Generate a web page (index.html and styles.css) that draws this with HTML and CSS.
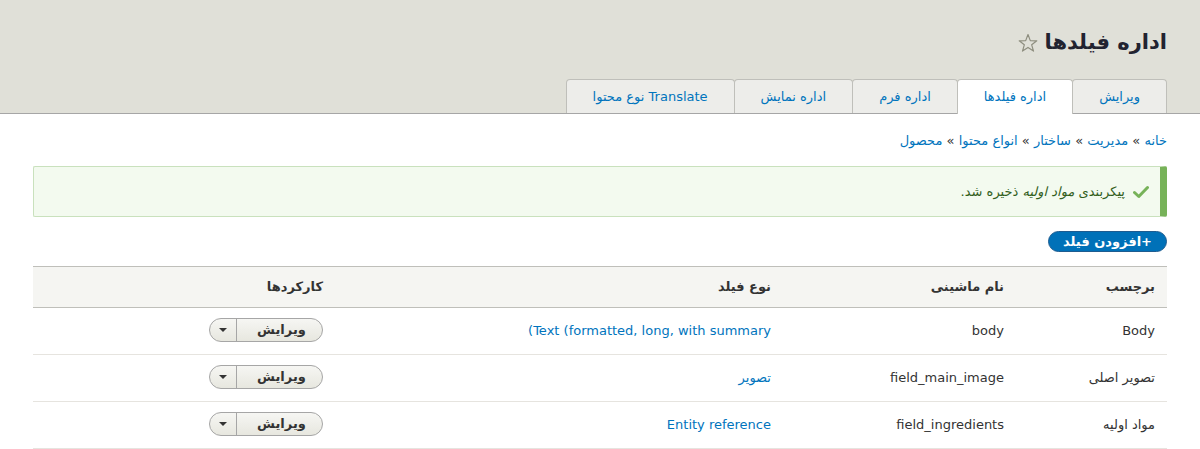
FILE: index.html
```html
<!DOCTYPE html>
<html lang="fa" dir="rtl">
<head>
<meta charset="utf-8">
<title>اداره فیلدها</title>
<link rel="stylesheet" href="styles.css">
</head>
<body>
<header class="page-header">
  <h1 class="page-title">اداره فیلدها <svg class="star" width="20" height="20" viewBox="0 0 20 20"><path d="M10 1.5 L12.3 7.6 L18.8 7.8 L13.7 11.8 L15.5 18.1 L10 14.4 L4.5 18.1 L6.3 11.8 L1.2 7.8 L7.7 7.6 Z" fill="none" stroke="#8e8e7f" stroke-width="1.2" stroke-linejoin="round"/></svg></h1>
  <ul class="tabs">
    <li class="tab"><a href="#">ویرایش</a></li>
    <li class="tab active"><a href="#">اداره فیلدها</a></li>
    <li class="tab"><a href="#">اداره فرم</a></li>
    <li class="tab"><a href="#">اداره نمایش</a></li>
    <li class="tab"><a href="#">Translate نوع محتوا</a></li>
  </ul>
</header>
<main class="content">
  <nav class="breadcrumb"><a href="#">خانه</a> » <a href="#">مدیریت</a> » <a href="#">ساختار</a> » <a href="#">انواع محتوا</a> » <a href="#">محصول</a></nav>
  <div class="message">
    <svg class="check" width="16" height="14" viewBox="0 0 16 14"><path d="M1.5 7.5 L5.8 11.5 L14.5 2.5" fill="none" stroke="#77b259" stroke-width="3" stroke-linecap="round" stroke-linejoin="round"/></svg>
    <span>پیکربندی <em>مواد اولیه</em> ذخیره شد.</span>
  </div>
  <div class="actions"><a class="button-add" href="#">+افزودن فیلد</a></div>
  <table class="fields">
    <thead>
      <tr><th class="c1">برچسب</th><th class="c2">نام ماشینی</th><th class="c3">نوع فیلد</th><th class="c4">کارکردها</th></tr>
    </thead>
    <tbody>
      <tr>
        <td>Body</td><td>body</td><td><a href="#">Text (formatted, long, with summary<span class="iso">)</span></a></td>
        <td><div class="dropbutton"><span class="db-main">ویرایش</span><span class="db-toggle"><i class="arrow"></i></span></div></td>
      </tr>
      <tr>
        <td>تصویر اصلی</td><td>field_main_image</td><td><a href="#">تصویر</a></td>
        <td><div class="dropbutton"><span class="db-main">ویرایش</span><span class="db-toggle"><i class="arrow"></i></span></div></td>
      </tr>
      <tr>
        <td>مواد اولیه</td><td>field_ingredients</td><td><a href="#">Entity reference</a></td>
        <td><div class="dropbutton"><span class="db-main">ویرایش</span><span class="db-toggle"><i class="arrow"></i></span></div></td>
      </tr>
    </tbody>
  </table>
</main>
</body>
</html>
```
FILE: styles.css
```css
html, body {
  margin: 0;
  padding: 0;
}
body {
  font-family: "DejaVu Sans", sans-serif;
  font-size: 13px;
  color: #222330;
  background: #fff;
  direction: rtl;
}
a {
  color: #0074bd;
  text-decoration: none;
}
.iso {
  unicode-bidi: isolate;
}
.page-header {
  background: #e0e0d8;
  border-bottom: 1px solid #a6a6a6;
  padding: 0 33px;
  height: 113px;
  box-sizing: content-box;
}
.page-title {
  margin: 0;
  padding-top: 28px;
  font-size: 21px;
  line-height: 29px;
  font-weight: bold;
  color: #222330;
  display: flex;
  align-items: center;
  gap: 7px;
}
.star {
  display: block;
}
.tabs {
  list-style: none;
  margin: 22px 0 0;
  padding: 0;
  display: flex;
}
.tab {
  background: #ededea;
  border: 1px solid #bfbfba;
  border-bottom: none;
  border-radius: 4px 4px 0 0;
  height: 33px;
  margin-left: -1px;
}
.tab a {
  display: block;
  line-height: 33px;
  padding: 0 26px;
}
.tab.active {
  background: #fff;
  height: 34px;
  position: relative;
  z-index: 1;
}
.content {
  padding: 18px 33px 0;
}
.breadcrumb {
  font-size: 13px;
  line-height: 18px;
  color: #333;
}
.message {
  margin-top: 16px;
  height: 51px;
  box-sizing: border-box;
  background: #f3faef;
  border: 1px solid #c9e1bd;
  border-right: 7px solid #77b259;
  border-radius: 2px;
  display: flex;
  align-items: center;
  gap: 8px;
  padding-right: 11px;
  color: #325e1c;
}
.check {
  display: block;
}
.actions {
  margin-top: 14px;
  display: flex;
}
.button-add {
  display: block;
  background: #0071b8;
  color: #fff;
  font-weight: bold;
  height: 21px;
  line-height: 19px;
  border-radius: 11px;
  padding: 0 14px;
  border: 1px solid #1e5c90;
  box-sizing: border-box;
  white-space: nowrap;
}
.fields {
  margin-top: 14px;
  width: 100%;
  border-collapse: collapse;
}
.fields th {
  background: #f5f5f2;
  border-top: 1px solid #bfbfba;
  border-bottom: 1px solid #bfbfba;
  height: 41px;
  text-align: right;
  padding: 0 12px 1px;
  font-weight: bold;
  color: #333;
  box-sizing: border-box;
}
.fields th.c1 { width: 151px; }
.fields th.c2 { width: 233px; }
.fields th.c3 { width: 448px; }
.fields td {
  height: 47px;
  padding: 0 12px 2px;
  border-bottom: 1px solid #e6e4df;
  color: #333;
  box-sizing: border-box;
}
.dropbutton {
  display: inline-flex;
  height: 24px;
  width: 114px;
  box-sizing: border-box;
  border: 1px solid #a6a6a6;
  border-radius: 12px;
  background: linear-gradient(to bottom, #f6f6f3, #e7e7df);
  overflow: hidden;
  vertical-align: middle;
}
.db-main {
  flex: 1;
  text-align: center;
  font-weight: bold;
  line-height: 22px;
  color: #333;
  padding-left: 4px;
}
.db-toggle {
  width: 26px;
  border-right: 1px solid #a6a6a6;
  display: flex;
  align-items: center;
  justify-content: center;
}
.arrow {
  width: 0;
  height: 0;
  border-left: 4px solid transparent;
  border-right: 4px solid transparent;
  border-top: 4px solid #333;
}
```
